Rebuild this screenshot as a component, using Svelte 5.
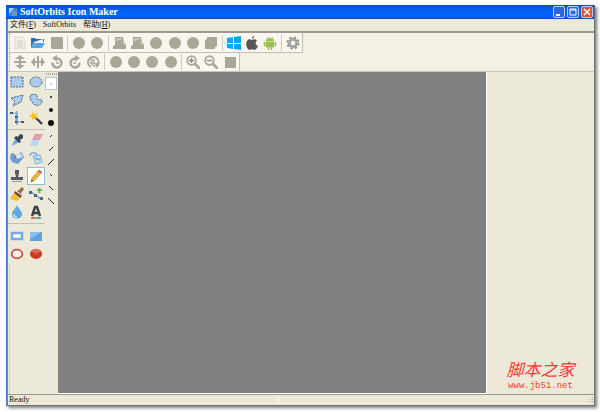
<script lang="ts">
	type Tool = { icon: string; label: string; active?: boolean };

	const fileBar: Tool[][] = [
		[
			{ icon: 'new', label: 'New' },
			{ icon: 'open', label: 'Open' },
			{ icon: 'save', label: 'Save' }
		],
		[
			{ icon: 'dot', label: 'Undo' },
			{ icon: 'dot', label: 'Redo' }
		],
		[
			{ icon: 'import', label: 'Import' },
			{ icon: 'import', label: 'Export' },
			{ icon: 'dot', label: 'Add' },
			{ icon: 'dot', label: 'Edit' },
			{ icon: 'dot', label: 'Remove' },
			{ icon: 'copy', label: 'Copy' }
		],
		[
			{ icon: 'windows', label: 'Windows icon' },
			{ icon: 'apple', label: 'Mac icon' },
			{ icon: 'android', label: 'Android icon' }
		],
		[{ icon: 'gear', label: 'Settings' }]
	];

	const editBar: Tool[][] = [
		[
			{ icon: 'flipv', label: 'Flip vertical' },
			{ icon: 'fliph', label: 'Flip horizontal' },
			{ icon: 'left', label: 'Rotate left' },
			{ icon: 'right', label: 'Rotate right' },
			{ icon: 'angle', label: 'Rotate by angle' }
		],
		[
			{ icon: 'dot', label: 'Brightness' },
			{ icon: 'dot', label: 'Contrast' },
			{ icon: 'dot', label: 'Hue' },
			{ icon: 'dot', label: 'Shadow' }
		],
		[
			{ icon: 'zoomin', label: 'Zoom in' },
			{ icon: 'zoomout', label: 'Zoom out' },
			{ icon: 'square', label: 'Actual size' }
		]
	];

	let palette: Tool[][] = $state([
		[
			{ icon: 'selrect', label: 'Select rectangle' },
			{ icon: 'selellipse', label: 'Select ellipse' },
			{ icon: 'selpoly', label: 'Select polygon' },
			{ icon: 'lasso', label: 'Lasso' },
			{ icon: 'crop', label: 'Hot spot' },
			{ icon: 'wand', label: 'Magic wand' }
		],
		[
			{ icon: 'picker', label: 'Color picker' },
			{ icon: 'eraser', label: 'Eraser' },
			{ icon: 'fill', label: 'Fill' },
			{ icon: 'replace', label: 'Replace color' },
			{ icon: 'stamp', label: 'Stamp' },
			{ icon: 'pencil', label: 'Pencil', active: true },
			{ icon: 'brush', label: 'Brush' },
			{ icon: 'line', label: 'Line' },
			{ icon: 'drop', label: 'Blur' },
			{ icon: 'text', label: 'Text' }
		],
		[
			{ icon: 'rect', label: 'Rectangle' },
			{ icon: 'rectfill', label: 'Filled rectangle' },
			{ icon: 'ellipse', label: 'Ellipse' },
			{ icon: 'ellipsefill', label: 'Filled ellipse' }
		]
	]);

	const brushes = [
		{ shape: 'round', size: 1 },
		{ shape: 'round', size: 2 },
		{ shape: 'round', size: 4 },
		{ shape: 'round', size: 6 },
		{ shape: 'slash', size: 2 },
		{ shape: 'slash', size: 4 },
		{ shape: 'slash', size: 6 },
		{ shape: 'back', size: 2 },
		{ shape: 'back', size: 4 },
		{ shape: 'back', size: 6 }
	];
	let brush = $state(0);

	function pick(tool: Tool) {
		for (const group of palette) {
			for (const item of group) item.active = item.icon === tool.icon;
		}
	}
</script>

{#snippet glyph(name: string)}
	<svg class="glyph" viewBox="0 0 14 14" aria-hidden="true">
		{#if name === 'new'}
			<path d="M2 1h7l3 3v9H2z" fill="#f1efe8" stroke="#dedbd0" />
			<path d="M4 5h6M4 7h6M4 9h6M4 11h6" stroke="#d0cec3" />
		{:else if name === 'open'}
			<path d="M0 12V2h4l1 1h8v3H3z" fill="#2d6fae" />
			<path d="M3 6l9-3v4H3z" fill="#eef5fb" />
			<path d="M3 7h11l-3 5H0z" fill="#58a6e6" />
		{:else if name === 'save'}
			<path d="M1 1h11l1 1v11H2l-1-1z" fill="#aaa799" />
		{:else if name === 'dot'}
			<circle cx="7" cy="7" r="6" fill="#aaa799" />
		{:else if name === 'import'}
			<path d="M0 13v-3l2-1V1h8l1 5 2 2v5z" fill="#aaa799" />
			<path d="M4 3h5M4 3v2M10 6l2 3" fill="none" stroke="#e6e3d8" />
		{:else if name === 'copy'}
			<path d="M3 1h10v9l-2 1v2H1V4l2-1z" fill="#aaa799" />
		{:else if name === 'windows'}
			<path d="M0 2l6-1v6H0zM7 1l7-1v7H7zM0 8h6v5l-6-1zM7 8h7v6l-7-1z" fill="#00a9ec" />
		{:else if name === 'apple'}
			<path d="M9 0c0 2-1 3-2 3 0-2 1-3 2-3zM7 4c2-1 4-1 5 1-2 1-2 4 1 5-1 2-2 4-4 4l-2-1-2 1C2 14 0 8 2 5c1-2 3-2 5-1z" fill="#555" />
		{:else if name === 'android'}
			<path d="M3 5c0-4 8-4 8 0zM3 6h8v5H9v3H8v-3H6v3H5v-3H3zM1 6h1v4H1zM12 6h1v4h-1z" fill="#97bf4b" stroke="#97bf4b" stroke-width=".5" />
			<path d="M4 1l1 1M10 1L9 2" stroke="#97bf4b" stroke-width=".7" />
		{:else if name === 'gear'}
			<circle cx="7" cy="7" r="5.5" fill="none" stroke="#8f8f8f" stroke-width="2" stroke-dasharray="2.4 1.9" />
			<circle cx="7" cy="7" r="3.6" fill="#fff" stroke="#a2a2a2" stroke-width="2.6" />
		{:else if name === 'flipv' || name === 'fliph'}
			<g transform={name === 'fliph' ? 'rotate(90 7 7)' : undefined} fill="#aaa799">
				<path d="M7 0l5 4H8v2h5v2H8v2h4l-5 4-5-4h4V8H1V6h5V4H2z" />
			</g>
		{:else if name === 'left' || name === 'right'}
			<g transform={name === 'right' ? 'matrix(-1 0 0 1 14 0)' : undefined}>
				<path d="M7 3.500a4.500 4.500 0 1 1-4.500 4" fill="none" stroke="#aaa799" stroke-width="2.400" />
				<path d="M7 0v7L2 3z" fill="#aaa799" />
				<path d="M6 8h3" stroke="#aaa799" stroke-width="1.500" />
			</g>
		{:else if name === 'angle'}
			<path d="M5 12A5.300 5.300 0 1 1 11 11" fill="none" stroke="#aaa799" stroke-width="2" />
			<path d="M8 8h6l-3 5z" fill="#aaa799" />
			<path d="M5 9V5h3v3H5l4 4" fill="none" stroke="#aaa799" stroke-width="1.300" />
		{:else if name === 'zoomin' || name === 'zoomout'}
			<circle cx="5.5" cy="5.5" r="4.300" fill="none" stroke="#aaa799" stroke-width="1.800" />
			<path d="M9 9l4 4" stroke="#aaa799" stroke-width="2.600" stroke-linecap="round" />
			<path d={name === 'zoomin' ? 'M3 5.5h5M5.5 3v5' : 'M3 5.5h5'} stroke="#8f8c80" stroke-width="1.400" />
		{:else if name === 'square'}
			<path d="M2 2h11v11H2z" fill="#aaa799" />
		{:else if name === 'selrect'}
			<path d="M1 2h12v10H1z" fill="#a9cbee" stroke="#46617f" stroke-dasharray="2 1" />
		{:else if name === 'selellipse'}
			<ellipse cx="7" cy="7" rx="6" ry="5" fill="#a9cbee" stroke="#46617f" stroke-dasharray="2 1" />
		{:else if name === 'selpoly'}
			<path d="M1 5l12-3-2 7-8 4 2-4z" fill="#a9cbee" stroke="#46617f" stroke-dasharray="2 1" />
		{:else if name === 'lasso'}
			<path d="M2 2c4-2 7 0 6 3 1 3 6 0 5 4-2 5-8 4-10 0C1 6 0 4 2 2z" fill="#a9cbee" stroke="#46617f" stroke-dasharray="2 1" />
		{:else if name === 'crop'}
			<path d="M1 2h5v10M6 4v7h7" fill="none" stroke="#83aee0" />
			<path d="M0 1h3v2H0zM5 5h3v2H5zM5 10h3v2H5zM11 10h3v2h-3z" fill="#475970" />
			<path d="M7 0v14" stroke="#4d86c6" />
		{:else if name === 'wand'}
			<path d="M6 6l7 7" stroke="#3d4050" stroke-width="2.400" />
			<path d="M4 0l1 3 4-1-2 3 2 3-3-1-3 2V6L0 5l3-2z" fill="#f5c31d" />
		{:else if name === 'picker'}
			<path d="M2 13l1-4 4-4 3 3-4 3z" fill="#78ade2" />
			<path d="M6 3l2 1 2-3 3 1v3l-3 2 1 2-2 1-5-5z" fill="#3d4658" />
		{:else if name === 'eraser'}
			<path d="M6 1h8L8 13H0z" fill="#b8d7f4" />
			<path d="M6 1h8l-3 6H3z" fill="#e79cab" />
		{:else if name === 'fill'}
			<path d="M1 3l5 2 5-4 3 5-6 7-6-2-2-4z" fill="#6d9cce" />
			<path d="M6 5l4-3 3 4-6 2z" fill="#d6e6f6" />
			<path d="M1 3c4-1 5 2 4 4" fill="none" stroke="#516c8a" />
		{:else if name === 'replace'}
			<path d="M4 5l7-1 2 7-6 2z" fill="#c6dff7" stroke="#7daee0" />
			<path d="M1 5c0-4 6-4 7-1M6 7l5 2" fill="none" stroke="#79a9dc" stroke-width="1.5" />
		{:else if name === 'stamp'}
			<path d="M5 1h4v3L8 8h5v3H1V8h5L5 4z" fill="#545a63" />
			<path d="M2 12h10v1H2z" fill="#969ba1" />
		{:else if name === 'pencil'}
			<path d="M2 13l1-4 7-8 3 2-7 8z" fill="#f2b63e" stroke="#9a742f" stroke-width=".6" />
			<path d="M10 1l3 2-1 2-3-2z" fill="#d9695a" />
			<path d="M2 13l1-2 1 1z" fill="#333" />
		{:else if name === 'brush'}
			<path d="M12 0l2 2-3 4 1 2-5-4 2-1z" fill="#9c6840" />
			<path d="M5 4l7 5-2 2-6-5z" fill="#694631" />
			<path d="M4 6l6 5-3 3-7-2z" fill="#f5bc31" />
		{:else if name === 'line'}
			<path d="M2 5l10 7" stroke="#5c9bd5" stroke-width="1.4" />
			<path d="M0 4h3v3H0zM11 10h3v3h-3zM5 7h3v3H5z" fill="#48698c" />
			<path d="M8 3h5M10.5 1v5" stroke="#48b34c" stroke-width="1.6" />
		{:else if name === 'drop'}
			<path d="M7 0c1 3 5 6 5 9 0 6-10 6-10 0 0-3 4-6 5-9z" fill="#5ea6e4" />
			<path d="M4 9c0 2 1 3 3 3" fill="none" stroke="#c9e4fa" stroke-width="1.5" />
		{:else if name === 'text'}
			<path d="M3 11L6 2h2l3 9M4 8h6" fill="none" stroke="#3c4048" stroke-width="2.4" />
			<path d="M2 12h3v2H2z" fill="#d66" /><path d="M5 12h4v2H5z" fill="#79b85c" /><path d="M9 12h3v2H9z" fill="#5e98d8" />
		{:else if name === 'rect'}
			<path d="M2 4h10v6H2z" fill="#f7fafc" stroke="#77aae2" stroke-width="2.4" />
		{:else if name === 'rectfill'}
			<path d="M1 3h12v9H1z" fill="#5f9fe0" /><path d="M1 3h12L1 10z" fill="#8bbcf0" />
		{:else if name === 'ellipse'}
			<ellipse cx="7" cy="7" rx="5.3" ry="4.3" fill="#f8f5ee" stroke="#cc5140" stroke-width="1.8" />
		{:else if name === 'ellipsefill'}
			<ellipse cx="7" cy="7" rx="6" ry="5" fill="#ca3b24" /><path d="M2 4c3-3 8-3 10 0L7 7z" fill="#dc6b55" />
		{/if}
	</svg>
{/snippet}

{#snippet toolbar(groups: Tool[][], label: string, cls: string)}
	<div class="toolbar {cls}" role="toolbar" aria-label={label}>
		{#each groups as group, i}
			{#if i > 0}<span class="divider"></span>{/if}
			{#each group as tool}
				<button type="button" class="tool" aria-label={tool.label}>{@render glyph(tool.icon)}</button>
			{/each}
		{/each}
	</div>
{/snippet}

<div class="desktop">
	<main class="window">
		<header class="titlebar">
			<svg class="logo" viewBox="0 0 10 10" aria-hidden="true">
				<path d="M1 1h8v8H1z" fill="#3f87cf" />
				<path d="M1 1h5L1 7z" fill="#a8d2f3" />
				<path d="M4 4h5v5H4z" fill="#6599ca" />
			</svg>
			<h1>SoftOrbits Icon Maker</h1>
			<button type="button" class="caption" aria-label="Minimize">
				<svg viewBox="0 0 12 12"><path d="M3 8h4v2H3z" fill="#fff" /></svg>
			</button>
			<button type="button" class="caption" aria-label="Maximize">
				<svg viewBox="0 0 12 12"><path d="M3 3h6v6H3zM3 4h6" fill="none" stroke="#fff" /></svg>
			</button>
			<button type="button" class="caption close" aria-label="Close">
				<svg viewBox="0 0 12 12"><path d="M3 3l6 6M9 3l-6 6" stroke="#fff" stroke-width="1.5" /></svg>
			</button>
		</header>

		<nav class="menu">
			<button type="button">文件(<u>F</u>)</button>
			<button type="button">SoftOrbits</button>
			<button type="button">帮助(<u>H</u>)</button>
		</nav>

		<div class="bars">
			{@render toolbar(fileBar, 'File', 'file')}
			{@render toolbar(editBar, 'Edit', 'edit')}
		</div>

		<div class="workspace">
			<div class="side">
				{#each palette as group}
					<div class="group">
						{#each group as tool}
							<button
								type="button"
								class="tool"
								class:active={tool.active}
								aria-label={tool.label}
								onclick={() => pick(tool)}
							>
								{@render glyph(tool.icon)}
							</button>
						{/each}
					</div>
				{/each}
				<div class="rest"></div>
			</div>

			<div class="brushes">
				<span class="grip"></span>
				{#each brushes as b, i}
					<button
						type="button"
						class="brush"
						class:selected={brush === i}
						aria-label="{b.shape} {b.size}"
						onclick={() => (brush = i)}
					>
						<svg viewBox="-5 -5 10 10">
							{#if b.shape === 'round'}
								<circle r={b.size / 2} />
							{:else}
								<line
									x1={-b.size / 2}
									x2={b.size / 2}
									y1={b.shape === 'slash' ? b.size / 2 : -b.size / 2}
									y2={b.shape === 'slash' ? -b.size / 2 : b.size / 2}
								/>
							{/if}
						</svg>
					</button>
				{/each}
			</div>

			<div class="canvas"></div>

			<aside class="panel">
				<div class="mark">
					<strong>脚本之家</strong>
					<span>www.jb51.net</span>
				</div>
			</aside>
		</div>

		<footer class="status">
			<span class="message">Ready</span>
			<span class="cell"></span>
			<svg class="sizer" viewBox="0 0 8 8" aria-hidden="true">
				<path d="M6 1h1v1H6zM4 3h1v1H4zM6 3h1v1H6zM2 5h1v1H2zM4 5h1v1H4zM6 5h1v1H6z" fill="#aaa799" />
			</svg>
		</footer>
	</main>
</div>

<style>
	:global(body) {
		margin: 0;
		background: #fdfdfd;
	}

	.desktop {
		display: flex;
		box-sizing: border-box;
		min-height: 100vh;
		padding: 5px 5px 6px 6px;
		font: 8px/10px "Liberation Serif", "Noto Sans CJK SC", serif;
		color: #111;
	}

	.window {
		flex: 1;
		display: flex;
		flex-direction: column;
		min-width: 0;
		box-sizing: border-box;
		border: solid #6c7078;
		border-width: 0 1px 1px 0;
		border-left: 2px solid #4a86cc;
		background: #ece9d8;
		box-shadow: 2px 2px 3px rgba(0, 0, 0, 0.5);
	}

	button {
		display: flex;
		align-items: center;
		justify-content: center;
		padding: 0;
		border: 0;
		background: none;
		font: inherit;
		color: inherit;
	}

	.titlebar {
		display: flex;
		align-items: center;
		gap: 2px;
		height: 14px;
		margin-left: -2px;
		padding: 0 1px 0 2px;
		background: linear-gradient(#0a50cc, #0062fa 50%, #0062fa 85%, #1647ac);
		color: #fff;
	}

	.logo {
		width: 10px;
		height: 10px;
	}

	h1 {
		flex: 1;
		margin: 0;
		font-size: 10px;
		line-height: 12px;
	}

	.caption {
		width: 12px;
		height: 12px;
		box-sizing: border-box;
		border: 1px solid #b8cdf5;
		border-radius: 2px;
		background: #2e66dc;
	}

	.caption.close {
		background: #df5231;
	}

	.caption svg {
		width: 12px;
		height: 12px;
		flex: none;
	}

	.menu {
		display: flex;
		align-items: center;
		gap: 7px;
		height: 12px;
		padding-left: 2px;
		border-bottom: 2px solid #9b998d;
	}

	.bars {
		background: #f3f0e5;
		border-bottom: 1px solid #c9c6b8;
	}

	.toolbar {
		display: flex;
		align-items: center;
		height: 18px;
		box-sizing: border-box;
		margin-left: 1px;
		padding-left: 1px;
		border-left: 1px dotted #aaa799;
		border-right: 1px solid #c3c0b2;
		background: #f8f6ef;
	}

	.toolbar.file {
		height: 20px;
		max-width: 294px;
		border-bottom: 1px solid #c3c0b2;
	}

	.toolbar.edit {
		max-width: 231px;
	}

	.toolbar .tool {
		flex: 1;
	}

	.divider {
		width: 1px;
		height: 16px;
		margin: 0 2px 0 1px;
		background: #cfccbf;
	}

	.glyph {
		flex: none;
		width: 14px;
		height: 14px;
	}

	.workspace {
		flex: 1;
		display: flex;
	}

	.side {
		display: flex;
		flex-direction: column;
		width: 37px;
	}

	.group {
		display: grid;
		grid-template-columns: 1fr 1fr;
		grid-auto-rows: 18px;
		padding: 1px 0 2px;
		border-bottom: 1px solid #c3c0b2;
	}

	.group:nth-of-type(3) {
		padding-top: 3px;
		border: 0;
	}

	.group .tool {
		box-sizing: border-box;
		border: 1px solid transparent;
	}

	.group .tool.active {
		border-color: #9db8d4;
		background: #fdfdfb;
	}

	.rest {
		flex: 1;
		margin-left: 1px;
		border-left: 1px solid #d5d2c4;
	}

	.brushes {
		width: 13px;
	}

	.grip {
		display: block;
		height: 2px;
		margin: 1px 1px 2px;
		border-top: 1px dotted #aaa799;
		border-bottom: 1px dotted #aaa799;
		box-sizing: border-box;
	}

	.brush {
		width: 12px;
		height: 13px;
		box-sizing: border-box;
		border: 1px solid transparent;
	}

	.brush.selected {
		border-color: #b4c2d0;
		background: #fff;
	}

	.brush svg {
		width: 10px;
		height: 10px;
		flex: none;
		stroke: #222;
		stroke-width: 1;
	}

	.brush circle {
		stroke: none;
		fill: #111;
	}

	.canvas {
		flex: 1;
		background: #808080;
		border-right: 1px solid #fff;
		border-bottom: 1px solid #fff;
	}

	.panel {
		display: flex;
		align-items: flex-end;
		justify-content: center;
		width: 107px;
	}

	.mark {
		display: flex;
		flex-direction: column;
		align-items: center;
		padding-bottom: 3px;
		color: #f53b35;
	}

	.mark strong {
		font: italic 17px/24px "Noto Sans CJK SC", sans-serif;
	}

	.mark span {
		font: 9px/10px "Liberation Mono", monospace;
	}

	.status {
		display: flex;
		align-items: center;
		height: 10px;
		border-top: 1px solid #9c998c;
	}

	.message {
		flex: 7;
		padding-left: 1px;
	}

	.cell {
		flex: 8;
		height: 8px;
		border-left: 1px solid #fff;
	}

	.sizer {
		width: 8px;
		height: 8px;
	}
</style>
